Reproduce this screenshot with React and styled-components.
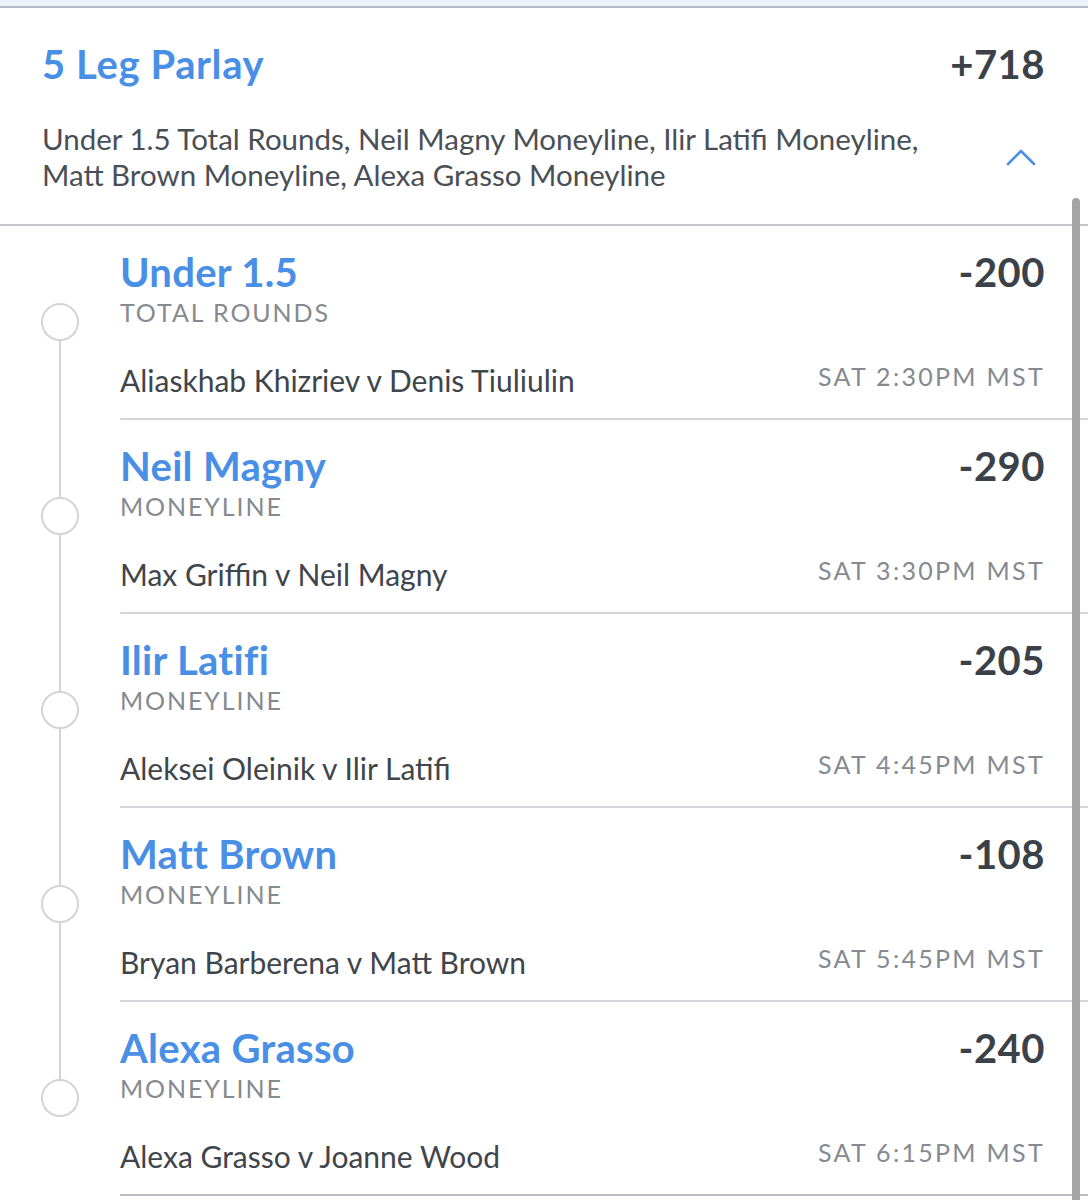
import styled, { createGlobalStyle } from 'styled-components';

const GlobalStyle = createGlobalStyle`
    body {
        margin: 0;
        background: #ffffff;
        font-family: Lato, "Open Sans", sans-serif;
    }
`;

const BLUE = '#4a8fe6';
const DARK = '#3b4148';
const GRAY = '#858a91';

const legs = [
    { pick: 'Under 1.5', market: 'Total Rounds', odds: '-200', matchup: 'Aliaskhab Khizriev v Denis Tiuliulin', time: 'SAT 2:30PM MST' },
    { pick: 'Neil Magny', market: 'Moneyline', odds: '-290', matchup: 'Max Griffin v Neil Magny', time: 'SAT 3:30PM MST' },
    { pick: 'Ilir Latifi', market: 'Moneyline', odds: '-205', matchup: 'Aleksei Oleinik v Ilir Latifi', time: 'SAT 4:45PM MST' },
    { pick: 'Matt Brown', market: 'Moneyline', odds: '-108', matchup: 'Bryan Barberena v Matt Brown', time: 'SAT 5:45PM MST' },
    { pick: 'Alexa Grasso', market: 'Moneyline', odds: '-240', matchup: 'Alexa Grasso v Joanne Wood', time: 'SAT 6:15PM MST' },
];

const Page = styled.div`
    position: relative;
    width: 1088px;
    height: 1200px;
    overflow: hidden;
    background: #ffffff;
`;

const TopStrip = styled.div`
    height: 6px;
    background: #eef0f7;
    border-bottom: 2px solid #b6bac8;
`;

const Header = styled.div`
    padding: 34px 43px 31px 42px;
    border-bottom: 2px solid #c3c6cf;
`;

const TitleRow = styled.div`
    display: flex;
    align-items: center;
    justify-content: space-between;
    height: 44px;
`;

const ParlayTitle = styled.span`
    font-size: 40px;
    line-height: 44px;
    font-weight: 700;
    letter-spacing: 0.6px;
    color: ${BLUE};
`;

const Odds = styled.span`
    font-size: 40px;
    line-height: 44px;
    font-weight: 700;
    letter-spacing: 0.5px;
    color: ${DARK};
`;

const DescRow = styled.div`
    display: flex;
    align-items: center;
    justify-content: space-between;
    margin-top: 35px;
`;

const Description = styled.p`
    margin: 0;
    width: 940px;
    font-size: 29.5px;
    line-height: 36px;
    color: #4a4f56;
`;

const Chevron = styled.svg`
    width: 30px;
    height: 18px;
    margin-right: 9px;
    flex-shrink: 0;
`;

const LegList = styled.div`
    display: flex;
    flex-direction: column;
`;

const Leg = styled.div`
    display: flex;
    height: 194px;
`;

const Rail = styled.div`
    width: 120px;
    display: flex;
    flex-direction: column;
    align-items: center;
`;

const Segment = styled.div`
    width: 2px;
    background: ${({ $hidden }) => ($hidden ? 'transparent' : '#d3d4d7')};
    height: ${({ $top }) => ($top ? '77px' : 'auto')};
    flex: ${({ $top }) => ($top ? '0 0 auto' : '1')};
`;

const Dot = styled.div`
    width: 34px;
    height: 34px;
    border-radius: 50%;
    border: 2px solid #d3d4d7;
    background: #ffffff;
    flex-shrink: 0;
`;

const LegBody = styled.div`
    flex: 1;
    padding: 24px 43px 20px 0;
    border-bottom: 2px solid ${({ $last }) => ($last ? '#b9bcc5' : '#d4d6db')};
`;

const Row = styled.div`
    display: flex;
    align-items: center;
    justify-content: space-between;
`;

const Pick = styled.span`
    font-size: 40px;
    line-height: 44px;
    font-weight: 700;
    letter-spacing: 0.3px;
    color: ${BLUE};
`;

const Market = styled.div`
    margin-top: 3px;
    font-size: 25px;
    line-height: 30px;
    letter-spacing: 1.9px;
    text-transform: uppercase;
    color: ${GRAY};
`;

const Matchup = styled.span`
    font-size: 30px;
    line-height: 36px;
    color: #40454c;
`;

const Time = styled.span`
    font-size: 25px;
    line-height: 36px;
    letter-spacing: 2.3px;
    color: ${GRAY};
    margin-top: -8px;
`;

const MatchRow = styled(Row)`
    margin-top: 35px;
`;

const Scrollbar = styled.div`
    position: absolute;
    top: 198px;
    bottom: 0;
    right: 8px;
    width: 8px;
    border-radius: 4px 4px 0 0;
    background: #a4a4a4;
`;

export default function App() {
    return (
        <Page>
            <GlobalStyle />
            <TopStrip />
            <Header>
                <TitleRow>
                    <ParlayTitle>5 Leg Parlay</ParlayTitle>
                    <Odds>+718</Odds>
                </TitleRow>
                <DescRow>
                    <Description>
                        Under 1.5 Total Rounds, Neil Magny Moneyline, Ilir Latifi Moneyline, Matt Brown Moneyline, Alexa Grasso Moneyline
                    </Description>
                    <Chevron viewBox="0 0 30 18">
                        <path d="M2 16 L15 3 L28 16" fill="none" stroke={BLUE} strokeWidth="2.6" strokeLinecap="round" strokeLinejoin="round" />
                    </Chevron>
                </DescRow>
            </Header>
            <LegList>
                {legs.map((leg, i) => (
                    <Leg key={leg.pick}>
                        <Rail>
                            <Segment $top $hidden={i === 0} />
                            <Dot />
                            <Segment $hidden={i === legs.length - 1} />
                        </Rail>
                        <LegBody $last={i === legs.length - 1}>
                            <Row>
                                <Pick>{leg.pick}</Pick>
                                <Odds>{leg.odds}</Odds>
                            </Row>
                            <Market>{leg.market}</Market>
                            <MatchRow>
                                <Matchup>{leg.matchup}</Matchup>
                                <Time>{leg.time}</Time>
                            </MatchRow>
                        </LegBody>
                    </Leg>
                ))}
            </LegList>
            <Scrollbar />
        </Page>
    );
}
